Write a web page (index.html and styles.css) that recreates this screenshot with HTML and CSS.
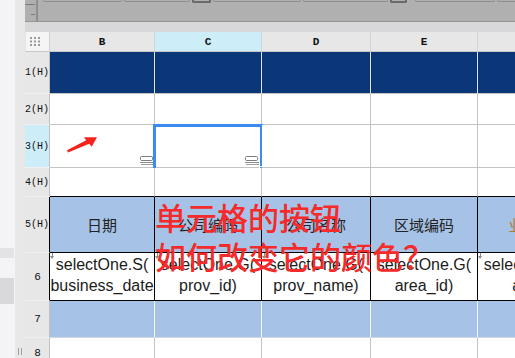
FILE: index.html
```html
<!DOCTYPE html>
<html lang="zh">
<head>
<meta charset="utf-8">
<title>Sheet</title>
<link rel="stylesheet" href="styles.css">
</head>
<body>
<div class="app">
  <aside class="strip">
    <div class="blk1"></div>
    <div class="blk2"></div>
  </aside>
  <div class="gutter"><span class="grip"></span></div>
  <main class="main">
    <div class="toolbar">
      <div class="tb-left"></div>
      <div class="ruler"><span class="tick t1"></span><span class="tick t2"></span></div>
      <div class="tbtns">
        <span class="tb w79"></span>
        <span class="tb w66"></span>
        <span class="tb dark w19"></span>
        <span class="tb w88"></span>
        <span class="tb w85"></span>
        <span class="tb dark w17"></span>
        <span class="tb w80 gap"></span>
        <span class="tb w30"></span>
      </div>
    </div>
    <div class="band"></div>
    <div class="sheet">
      <div class="corner"><svg width="12" height="9" viewBox="0 0 12 9"><g fill="#9a9a9a"><rect x="0" y="0" width="2" height="2"/><rect x="4" y="0" width="2" height="2"/><rect x="8" y="0" width="2" height="2"/><rect x="0" y="3.5" width="2" height="2"/><rect x="4" y="3.5" width="2" height="2"/><rect x="8" y="3.5" width="2" height="2"/><rect x="0" y="7" width="2" height="2"/><rect x="4" y="7" width="2" height="2"/><rect x="8" y="7" width="2" height="2"/></g></svg></div>
      <div class="c ch">B</div>
      <div class="c ch hl">C</div>
      <div class="c ch">D</div>
      <div class="c ch">E</div>
      <div class="c ch"></div>

      <div class="c rh">1(H)</div>
      <div class="c dk"></div><div class="c dk"></div><div class="c dk"></div><div class="c dk"></div><div class="c dk"></div>

      <div class="c rh">2(H)</div>
      <div class="c"></div><div class="c"></div><div class="c"></div><div class="c"></div><div class="c"></div>

      <div class="c rh hl">3(H)</div>
      <div class="c">
        <svg class="arrow" width="32" height="18" viewBox="0 0 32 18"><polygon points="1,15.3 20.2,5.2 18,2.3 31,2.3 25.7,11.7 23.2,8.8 2,17.4" fill="#f5231c"/></svg>
        <svg class="widget" width="14" height="9" viewBox="0 0 14 9"><rect x="0.5" y="0.5" width="12" height="4" rx="1" fill="#fff" stroke="#7c7c7c"/><line x1="0" y1="6.5" x2="14" y2="6.5" stroke="#8c8c8c"/><line x1="1" y1="8.5" x2="14" y2="8.5" stroke="#a0a0a0"/></svg>
      </div>
      <div class="c">
        <svg class="widget" width="14" height="9" viewBox="0 0 14 9"><rect x="0.5" y="0.5" width="12" height="4" rx="1" fill="#fff" stroke="#7c7c7c"/><line x1="0" y1="6.5" x2="14" y2="6.5" stroke="#8c8c8c"/><line x1="1" y1="8.5" x2="14" y2="8.5" stroke="#a0a0a0"/></svg>
        <div class="sel"></div>
        <div class="handle"></div>
      </div>
      <div class="c"></div><div class="c"></div><div class="c"></div>

      <div class="c rh">4(H)</div>
      <div class="c bb"></div><div class="c bb"></div><div class="c bb"></div><div class="c bb"></div><div class="c bb"></div>

      <div class="c rh blk">5(H)</div>
      <div class="c hd">日期</div>
      <div class="c hd">公司编码</div>
      <div class="c hd">公司名称</div>
      <div class="c hd">区域编码</div>
      <div class="c hd brown">业务量</div>

      <div class="c rh blk num">6</div>
      <div class="c dt mk">selectOne.S(<br>business_date<br>)</div>
      <div class="c dt mk">selectOne.G(<br>prov_id)</div>
      <div class="c dt mk">selectOne.G(<br>prov_name)</div>
      <div class="c dt">selectOne.G(<br>area_id)</div>
      <div class="c dt mk">selectOne.G(<br>area)</div>

      <div class="c rh num">7</div>
      <div class="c lb"></div><div class="c lb"></div><div class="c lb"></div><div class="c lb"></div><div class="c lb"></div>

      <div class="c rh num">8</div>
      <div class="c"></div><div class="c"></div><div class="c"></div><div class="c"></div><div class="c"></div>
    </div>
    <div class="note">单元格的按钮<br>如何改变它的颜色？</div>
  </main>
</div>
</body>
</html>
```

FILE: styles.css
```css
* { box-sizing: border-box; margin: 0; padding: 0; }

body {
  width: 515px;
  height: 358px;
  overflow: hidden;
  background: #fff;
  font-family: "Liberation Sans", Arial, sans-serif;
}

.app {
  display: flex;
  height: 358px;
}

.strip {
  width: 15px;
  flex: none;
  background: #f4f4f6;
  display: flex;
  flex-direction: column;
}
.strip .blk1 { margin-top: 248px; width: 14px; height: 10px; background: #e3e3e6; }
.strip .blk2 { margin-top: 20px; width: 14px; height: 26px; background: #d9d9dc; }

.gutter {
  width: 10px;
  flex: none;
  background: #e8e8e8;
  display: flex;
  align-items: flex-end;
  justify-content: center;
  padding-bottom: 3px;
}
.grip {
  width: 4px;
  height: 7px;
  border-left: 1px solid #a0a0a0;
  border-right: 1px solid #a0a0a0;
}

.main {
  flex: 1;
  min-width: 0;
  position: relative;
  overflow: hidden;
  display: flex;
  flex-direction: column;
}

/* toolbar */
.toolbar {
  height: 22px;
  flex: none;
  display: flex;
  background: #b0b0b0;
  border-bottom: 1px solid #949494;
}
.tb-left { width: 13px; background: #a9a9a9; }
.ruler {
  width: 19px;
  border-right: 2px solid #8e8e8e;
  display: flex;
  flex-direction: column;
  align-items: flex-end;
  padding-right: 1px;
}
.tick { display: block; height: 1px; background: #7a7a7a; }
.tick.t1 { width: 10px; margin-top: 4px; }
.tick.t2 { width: 4px; margin-top: 9px; }

.tbtns {
  display: flex;
  gap: 2px;
  margin-left: 5px;
  align-items: flex-start;
}
.tb {
  display: block;
  flex: none;
  height: 2px;
  border: 1px solid #8e8e8e;
  border-top: none;
  border-radius: 0 0 2px 2px;
}
.tb.dark { border-color: #6a6a6a; height: 3px; border-width: 2px; border-top: none; }
.tb.gap { margin-left: 6px; }
.w79 { width: 79px; }
.w66 { width: 66px; }
.w19 { width: 19px; }
.w88 { width: 88px; }
.w85 { width: 85px; }
.w17 { width: 17px; }
.w80 { width: 80px; }
.w30 { width: 30px; }

.band { height: 10px; flex: none; background: #d8d8da; }

/* sheet grid */
.sheet {
  display: grid;
  grid-template-columns: 25px 105px 107px 109px 107px 107px;
  grid-template-rows: 20px 42px 31px 43px 29px 56px 48px 37px 30px;
}

.c {
  position: relative;
  border-right: 1px solid #c4c4c4;
  border-bottom: 1px solid #c4c4c4;
  background: #fff;
}

.corner {
  background: #f5f5f5;
  border-left: 1px solid #e4e4e4;
  border-right: 1px solid #d0d0d0;
  border-bottom: 1px solid #c8c8c8;
  display: flex;
  align-items: center;
  padding-left: 4px;
}

.ch {
  background: #e7e7e7;
  border-right-color: #d4d4d4;
  border-bottom-color: #c8c8c8;
  display: flex;
  align-items: center;
  justify-content: center;
  font-family: "Liberation Mono", monospace;
  font-size: 11px;
  font-weight: bold;
  color: #111;
  padding-top: 1px;
}
.hl { background: #cdeef9; }
.ch.hl { background: #cdeef9; }

.rh {
  background: #e7e7e7;
  border-right-color: #c0c0c0;
  border-bottom-color: #f0f0f0;
  display: flex;
  align-items: center;
  font-family: "Liberation Mono", monospace;
  font-size: 10px;
  color: #111;
}
.rh.hl { background: #cdeef9; }
.rh.blk { border-right-color: #000; }
.rh.num { justify-content: center; padding-left: 1px; font-size: 11px; }

.dk {
  background: #0b3779;
  border-right-color: #dde3ec;
  border-bottom-color: #c4c4c4;
}

.bb { border-bottom-color: #000; }

.hd {
  background: #a6c2e6;
  border-right-color: #000;
  border-bottom-color: #000;
  display: flex;
  align-items: center;
  justify-content: center;
  font-family: "Noto Sans CJK SC", sans-serif;
  font-size: 15px;
  color: #222;
  white-space: nowrap;
}
.hd.brown { color: #b8792b; }

.dt {
  border-right-color: #000;
  border-bottom-color: #000;
  overflow: hidden;
  text-align: center;
  font-size: 16px;
  line-height: 21px;
  padding-top: 1px;
  color: #1c1c1c;
  white-space: nowrap;
}
.mk::before {
  content: "";
  position: absolute;
  left: 2px;
  top: 0;
  width: 1px;
  height: 3px;
  background: #8a8a8a;
}
.mk::after {
  content: "";
  position: absolute;
  left: 0;
  top: 3px;
  border-left: 2.5px solid transparent;
  border-right: 2.5px solid transparent;
  border-top: 3px solid #8a8a8a;
}

.lb {
  background: #a6c2e6;
  border-right-color: #f4f6fa;
  border-bottom-color: #cfd6e0;
}

/* overlays inside cells */
.arrow { position: absolute; left: 16px; top: 10px; }
.widget { position: absolute; left: 90px; top: 31px; }

.sel {
  position: absolute;
  left: -2px;
  top: -1px;
  width: 110px;
  height: 47px;
  border: 3px solid #3a8cf0;
}
.handle {
  position: absolute;
  left: 105px;
  top: 42px;
  width: 5px;
  height: 5px;
  background: #3a8cf0;
  box-shadow: 0 0 0 1px #fff;
}

.note {
  position: absolute;
  left: 130px;
  top: 197px;
  font-family: "Noto Sans CJK SC", sans-serif;
  font-size: 31px;
  font-weight: 500;
  line-height: 39px;
  color: #f52a2a;
  white-space: nowrap;
  pointer-events: none;
}
```
